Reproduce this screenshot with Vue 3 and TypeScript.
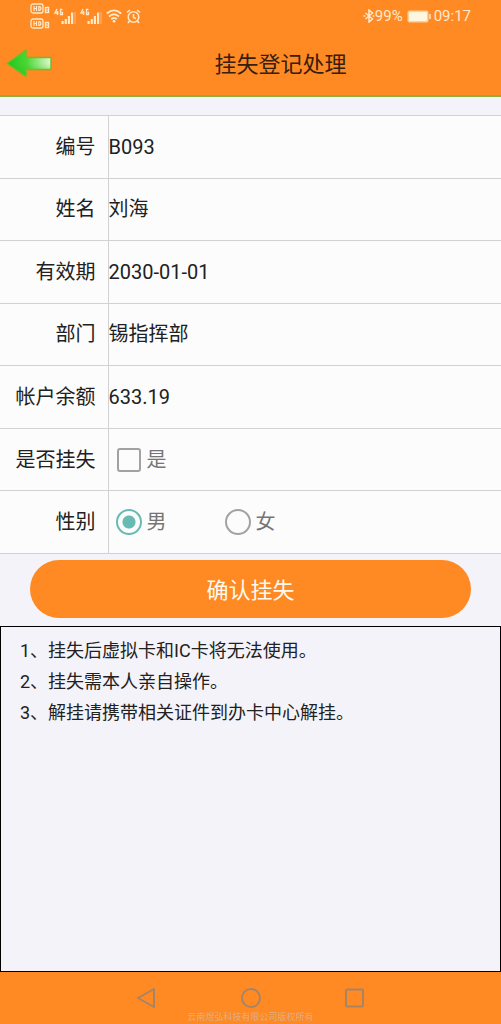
<script setup lang="ts">
import { ref } from 'vue'

interface Field {
  label: string
  value: string
}

const fields: Field[] = [
  { label: '编号', value: 'B093' },
  { label: '姓名', value: '刘海' },
  { label: '有效期', value: '2030-01-01' },
  { label: '部门', value: '锡指挥部' },
  { label: '帐户余额', value: '633.19' },
]

const notes: string[] = [
  '1、挂失后虚拟卡和IC卡将无法使用。',
  '2、挂失需本人亲自操作。',
  '3、解挂请携带相关证件到办卡中心解挂。',
]

const lost = ref(false)
const gender = ref('male')
</script>

<template>
  <div class="screen">
    <header class="top">
      <div class="status">
        <div class="status-left">
          <svg class="hd" width="20" height="26" viewBox="0 0 20 26" fill="none" stroke="#ffe9c9">
            <g v-for="y in [0, 15]" :key="y" :transform="`translate(0 ${y})`">
              <rect x="1" y="1" width="12" height="9" rx="2" stroke-width="1.300" />
              <path d="M4 3v5M4 5.500h2.500M6.500 3v5M8.800 3v5M8.800 3.500h1l1 1v2l-1 1h-1" stroke-width="1.200" />
              <rect x="15.500" y="4.500" width="3" height="5" stroke-width="1.400" />
              <path d="M15.500 7h3" />
            </g>
          </svg>
          <svg v-for="n in 2" :key="n" class="signal" width="22" height="17" viewBox="0 0 22 17">
            <path d="M3 1L1 5h3.500M3.500 3v4M8.500 1.500h-2v5h2v-2h-1" fill="none" stroke="#ffe9c9" stroke-width="1.300" />
            <path d="M7.500 13h2.200v3H7.500zM10.700 11h2.200v5h-2.200zM13.800 8H16v8h-2.200zM17 4.500h2.200V16H17z" fill="#ffe9c9" />
            <path d="M21 4v12" stroke="#ffb77c" />
          </svg>
          <svg class="wifi" width="16" height="14" viewBox="0 0 16 14" fill="none" stroke="#ffe9c9" stroke-width="1.700">
            <path d="M.8 4.500Q8-1.800 15.200 4.500M3 7.500q5-4.500 10 0M5.200 10.200q2.800-2.400 5.600 0" />
            <circle cx="8" cy="12.300" r="1.400" fill="#ffe9c9" stroke="none" />
          </svg>
          <svg width="15" height="15" viewBox="0 0 15 15" fill="none" stroke="#ffe9c9" stroke-width="1.600">
            <circle cx="7.500" cy="8" r="5.300" />
            <path d="M1 3.500L4 1M14 3.500L11 1M7.500 5v3.500l2.500 1M3.500 12L2 14M11.500 12l1.500 2" />
          </svg>
        </div>
        <div class="status-right">
          <svg width="12" height="14" viewBox="0 0 12 14" fill="none" stroke="#ffe9c9" stroke-width="1.500">
            <path d="M2.500 4l7 6L6 13V1l3.500 3-7 6" />
            <path d="M.5 7h1.800M9.700 7h1.800" />
          </svg>
          <span>99%</span>
          <svg class="battery" width="24" height="13" viewBox="0 0 24 13">
            <rect x=".5" y=".5" width="21" height="12" rx="2" fill="#ffcf98" />
            <rect x="2" y="2" width="18" height="9" rx="1" fill="#fff6df" />
            <path d="M23 4v5" stroke="#ffe9c9" stroke-width="1.500" />
          </svg>
          <span>09:17</span>
        </div>
      </div>
      <div class="titlebar">
        <button class="back" type="button" aria-label="返回">
          <svg width="48" height="32" viewBox="0 0 48 32">
            <defs>
              <linearGradient id="arrow" x1="0" x2="1">
                <stop offset="0" stop-color="#20c51e" />
                <stop offset=".45" stop-color="#4bd735" />
                <stop offset="1" stop-color="#e2f8d4" />
              </linearGradient>
              <linearGradient id="shade" x1="0" y1="0" x2="0" y2="1">
                <stop offset=".5" stop-color="#36c51f" stop-opacity="0" />
                <stop offset="1" stop-color="#28b711" stop-opacity=".6" />
              </linearGradient>
            </defs>
            <path d="M2 15.500L21 2v7.500h25v12H21v7z" fill="url(#arrow)" />
            <path d="M2 15.500L21 2v7.500h25v12H21v7z" fill="url(#shade)" stroke="#73bd27" stroke-width="1.500" stroke-linejoin="round" />
          </svg>
        </button>
        <h1>挂失登记处理</h1>
      </div>
    </header>

    <main>
      <form @submit.prevent>
        <table>
          <tbody>
            <tr v-for="field in fields" :key="field.label">
              <th scope="row">{{ field.label }}</th>
              <td>{{ field.value }}</td>
            </tr>
            <tr>
              <th scope="row">是否挂失</th>
              <td>
                <div class="options">
                  <label><input v-model="lost" type="checkbox" /><span>是</span></label>
                </div>
              </td>
            </tr>
            <tr>
              <th scope="row">性别</th>
              <td>
                <div class="options">
                  <label><input v-model="gender" type="radio" name="gender" value="male" /><span>男</span></label>
                  <label><input v-model="gender" type="radio" name="gender" value="female" /><span>女</span></label>
                </div>
              </td>
            </tr>
          </tbody>
        </table>
        <button class="confirm" type="submit">确认挂失</button>
      </form>
      <section class="notes">
        <p v-for="note in notes" :key="note">{{ note }}</p>
      </section>
    </main>

    <footer>
      <nav>
        <button type="button" aria-label="后退">
          <svg width="22" height="22" viewBox="0 0 22 22"><path d="M2 11L18 2v18z" /></svg>
        </button>
        <button type="button" aria-label="主页">
          <svg width="22" height="22" viewBox="0 0 22 22"><circle cx="11" cy="11" r="9" /></svg>
        </button>
        <button type="button" aria-label="最近任务">
          <svg width="22" height="22" viewBox="0 0 22 22"><rect x="2" y="2.500" width="17" height="17" rx="1" /></svg>
        </button>
      </nav>
      <small>云南煜弘科技有限公司版权所有</small>
    </footer>
  </div>
</template>

<style>
body {
  margin: 0;
}
</style>

<style scoped>
.screen {
  display: flex;
  flex-direction: column;
  min-height: 100vh;
  background: #f4f3f9;
  color: #212121;
  font-family: Roboto, "Noto Sans CJK SC", sans-serif;
}
button {
  padding: 0;
  border: 0;
  background: none;
  font-family: inherit;
}
svg {
  display: block;
}
.top {
  background: #ff8923;
  border-bottom: 2px solid #8fae3c;
}
.status {
  display: flex;
  justify-content: space-between;
  align-items: center;
  height: 32px;
  padding: 0 30px;
  color: #ffe9c9;
  font-size: 15px;
}
.status-left,
.status-right {
  display: flex;
  align-items: center;
}
.status-left {
  gap: 4px;
}
.battery {
  margin: 0 3px 0 4px;
}
.titlebar {
  display: grid;
  grid-template-columns: 60px 1fr;
  align-items: center;
  height: 63px;
}
.back {
  justify-self: start;
  padding-left: 5px;
  cursor: pointer;
}
h1 {
  margin: 0;
  padding-top: 2px;
  color: #35200f;
  font-size: 22px;
  font-weight: 400;
  line-height: 32px;
  text-align: center;
}
main {
  display: flex;
  flex: 1;
  flex-direction: column;
  padding-top: 18px;
}
table {
  width: 100%;
  height: 439px;
  border-collapse: collapse;
  background: #fcfcfc;
  table-layout: fixed;
  font-size: 20px;
  line-height: 30px;
}
tr {
  border-top: 1px solid #d2d2d2;
  border-bottom: 1px solid #d2d2d2;
}
th {
  box-sizing: border-box;
  width: 108px;
  padding: 15px 12px 15px 0;
  border-right: 1px solid #d2d2d2;
  font-weight: 400;
  text-align: right;
}
td {
  padding: 15px 0;
}
.options {
  display: flex;
  height: 30px;
  color: #757575;
}
label {
  display: flex;
  align-items: center;
  width: 109px;
  padding-left: 7px;
  box-sizing: border-box;
  gap: 5px;
}
input {
  appearance: none;
  box-sizing: border-box;
  width: 26px;
  height: 26px;
  margin: 0;
  border: 2px solid #a2a2a2;
  border-radius: 50%;
}
input[type="checkbox"] {
  width: 24px;
  height: 24px;
  margin: 1px;
  border-radius: 3px;
}
input:checked {
  border-color: #67bbb3;
  background: radial-gradient(circle, #67bbb3 6px, transparent 7px);
}
.confirm {
  display: block;
  width: 88%;
  height: 58px;
  margin: 6px auto 8px;
  padding-bottom: 3px;
  border-radius: 29px;
  background: #ff8923;
  color: #fffaf0;
  font-size: 22px;
  cursor: pointer;
}
.notes {
  flex: 1;
  padding: 8px 19px;
  border: 1px solid #000;
  font-size: 18px;
  line-height: 31px;
}
.notes p {
  margin: 0;
}
footer {
  height: 52px;
  background: #ff8923;
}
nav {
  display: flex;
  justify-content: center;
  gap: 82px;
  padding-top: 15px;
}
nav svg {
  fill: none;
  stroke: #a68567;
  stroke-width: 2;
  stroke-linejoin: round;
}
small {
  display: block;
  color: #dfae82;
  font-size: 9px;
  line-height: 15px;
  padding-top: 1px;
  text-align: center;
}
</style>
